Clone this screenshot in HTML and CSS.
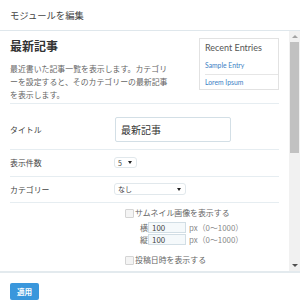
FILE: index.html
```html
<!DOCTYPE html>
<html lang="ja">
<head>
  <meta charset="UTF-8" />
  <meta name="viewport" content="width=device-width, initial-scale=1.0"/>
  <title>モジュールを編集</title>
  <link rel="stylesheet" href="styles.css">
</head>
<body>
  <div class="modal">
    <div class="modal-header">モジュールを編集</div>

    <div class="modal-body">
      <div class="body-inner">
        <div class="intro">
          <div class="intro-text">
            <h2>最新記事</h2>
            <p>最近書いた記事一覧を表示します。カテゴリ<br>ーを設定すると、そのカテゴリーの最新記事<br>を表示します。</p>
          </div>
          <div class="preview">
            <div class="preview-title">Recent Entries</div>
            <ul>
              <li>Sample Entry</li>
              <li>Lorem Ipsum</li>
            </ul>
          </div>
        </div>

        <div class="field field-title">
          <label>タイトル</label>
          <div class="text-input">最新記事</div>
        </div>

        <div class="field field-count">
          <label>表示件数</label>
          <div class="select select-small">5<span class="caret"></span></div>
        </div>

        <div class="field field-category">
          <label>カテゴリー</label>
          <div class="select select-wide">なし<span class="caret"></span></div>
        </div>

        <div class="options">
          <div class="check"><span class="box"></span>サムネイル画像を表示する</div>
          <div class="size-row size-first">
            <span class="size-label">横</span>
            <span class="num-input">100</span>
            <span class="hint">px（0〜1000）</span>
          </div>
          <div class="size-row">
            <span class="size-label">縦</span>
            <span class="num-input">100</span>
            <span class="hint">px（0〜1000）</span>
          </div>
          <div class="check check-date"><span class="box"></span>投稿日時を表示する</div>
        </div>
      </div>

      <div class="scrollbar">
        <div class="sb-btn"><span class="arrow-up"></span></div>
        <div class="sb-thumb"></div>
        <div class="sb-space"></div>
        <div class="sb-btn"><span class="arrow-down"></span></div>
      </div>
    </div>

    <div class="modal-footer">
      <button>適用</button>
    </div>
  </div>
</body>
</html>
```

FILE: styles.css
```css
body {
  margin: 0;
  background: #fff;
  font-family: "Noto Sans CJK JP", sans-serif;
  color: #444;
}
.modal {
  width: 300px;
  height: 307px;
  background: #fff;
  display: flex;
  flex-direction: column;
}
.modal-header {
  flex-shrink: 0;
  height: 30px;
  line-height: 31px;
  padding-left: 10px;
  font-size: 9.3px;
  color: #444;
  border-bottom: 1px solid #dfe7ec;
}
.modal-body {
  flex-shrink: 0;
  height: 240px;
  display: flex;
  border-bottom: 2px solid #e3eaee;
  overflow: hidden;
}
.body-inner {
  flex: 1;
  padding: 0 10px;
  overflow: hidden;
}
.intro {
  display: flex;
  justify-content: space-between;
  align-items: flex-start;
  padding: 7px 0 2px;
  border-bottom: 1px solid #e6edf1;
}
.intro h2 {
  margin: 0;
  font-size: 12px;
  line-height: 16px;
  font-weight: bold;
  color: #333;
}
.intro p {
  margin: 8px 0 0;
  font-size: 7.9px;
  line-height: 13px;
  color: #666;
}
.preview {
  width: 80px;
  height: 52px;
  box-sizing: border-box;
  border: 1px solid #e2e2e2;
  font-family: "Lato", "Open Sans", sans-serif;
}
.preview-title {
  padding: 2px 5px 0;
  font-size: 9px;
  line-height: 14px;
  color: #555;
}
.preview ul {
  list-style: none;
  margin: 1px 0 0 5px;
  padding: 0;
}
.preview li {
  font-size: 6.8px;
  line-height: 18px;
  color: #3d7fc5;
}
.preview li:first-child {
  border-bottom: 1px solid #e6e6e6;
}
.preview li:last-child {
  line-height: 15px;
}
.field {
  display: flex;
  align-items: center;
  border-bottom: 1px solid #e6edf1;
}
.field label {
  width: 104px;
  font-size: 7.9px;
  color: #444;
}
.field-title {
  padding: 13px 0 7px;
}
.field-count {
  padding: 7px 0 8px;
}
.field-category {
  padding: 6px 0 7px;
}
.text-input {
  width: 116px;
  height: 25px;
  box-sizing: border-box;
  margin-left: 1px;
  padding-left: 5px;
  border: 1px solid #d3dfe6;
  border-radius: 2px;
  font-size: 10px;
  line-height: 23px;
  color: #333;
}
.select {
  display: flex;
  align-items: center;
  justify-content: space-between;
  box-sizing: border-box;
  padding: 0 4px 0 3px;
  border: 1px solid #e1e8ec;
  border-radius: 3px;
  font-size: 7px;
  color: #444;
}
.select-small {
  width: 23px;
  height: 11px;
}
.select-wide {
  width: 72px;
  height: 12px;
}
.caret {
  width: 0;
  height: 0;
  border-left: 2.5px solid transparent;
  border-right: 2.5px solid transparent;
  border-top: 3.5px solid #222;
}
.options {
  padding: 4px 0 0 114px;
  font-size: 7.9px;
  color: #666;
}
.check {
  display: flex;
  align-items: center;
  line-height: 12px;
  margin-left: 1px;
}
.box {
  width: 7px;
  height: 7px;
  margin-right: 1px;
  border: 1px solid #d4d4d4;
  border-radius: 1px;
  background: #f4f4f4;
}
.size-row {
  display: flex;
  align-items: center;
  padding-left: 16px;
  height: 11px;
  margin-top: 1px;
}
.size-first {
  margin-top: 3px;
}
.size-label {
  width: 8px;
  color: #666;
}
.num-input {
  width: 38px;
  height: 11px;
  box-sizing: border-box;
  padding-left: 3px;
  border: 1px solid #d2dee5;
  background: #f5f9fb;
  line-height: 9px;
  color: #444;
}
.hint {
  margin-left: 3px;
  color: #888;
}
.check-date {
  margin-top: 9px;
}
.scrollbar {
  width: 11px;
  background: #f1f1f1;
  display: flex;
  flex-direction: column;
}
.sb-btn {
  height: 11px;
  display: flex;
  align-items: center;
  justify-content: center;
}
.arrow-up {
  width: 0;
  height: 0;
  border-left: 3px solid transparent;
  border-right: 3px solid transparent;
  border-bottom: 3px solid #a3a3a3;
}
.arrow-down {
  width: 0;
  height: 0;
  border-left: 3px solid transparent;
  border-right: 3px solid transparent;
  border-top: 3px solid #505050;
}
.sb-thumb {
  height: 111px;
  margin: 0 1px;
  background: #c1c1c1;
}
.sb-space {
  flex: 1;
}
.modal-footer {
  flex-shrink: 0;
  padding: 10px 10px 0;
}
.modal-footer button {
  display: block;
  width: 29px;
  height: 17px;
  padding: 0;
  border: none;
  border-radius: 2px;
  background: #3a97dc;
  color: #fff;
  font-family: "Noto Sans CJK JP", sans-serif;
  font-size: 7.6px;
  font-weight: bold;
}
```
